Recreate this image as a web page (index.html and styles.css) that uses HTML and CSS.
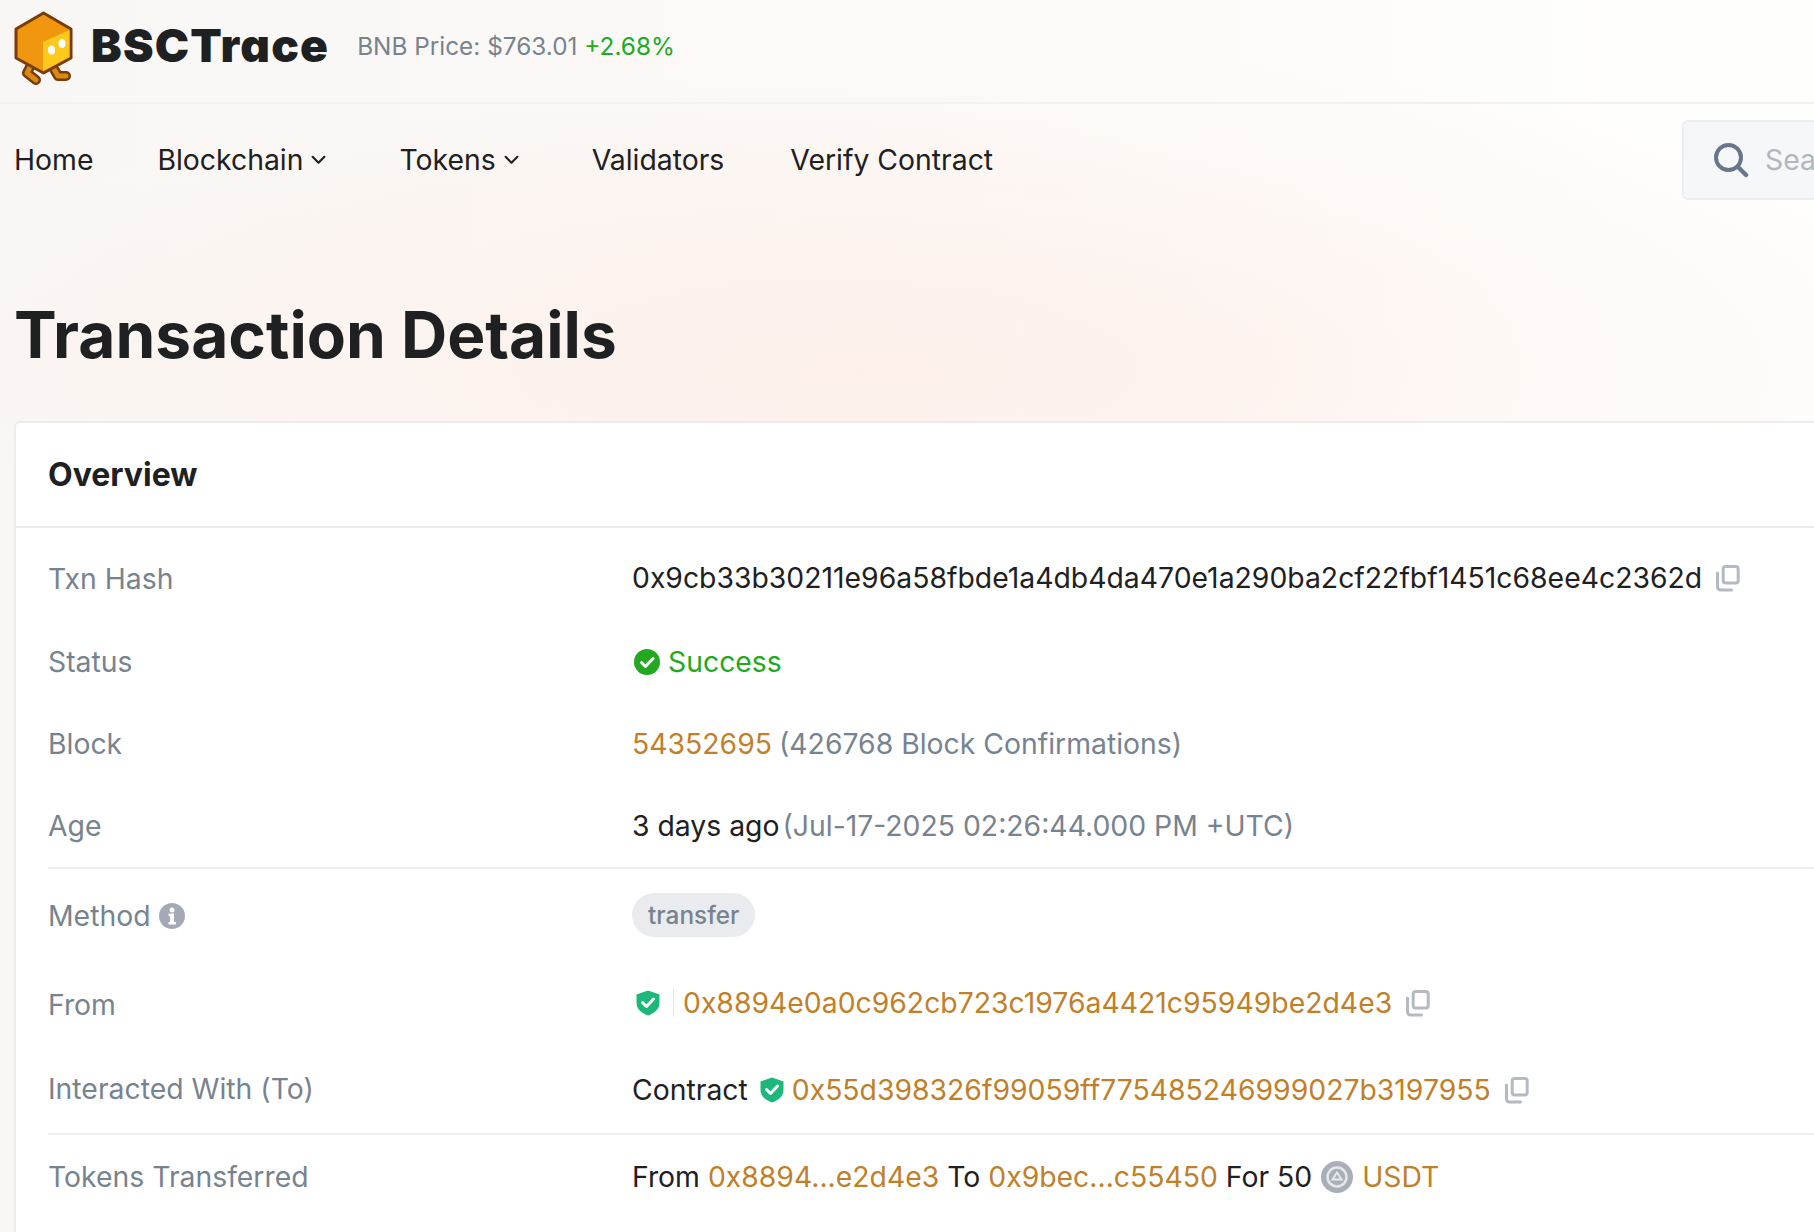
FILE: index.html
```html
<!DOCTYPE html>
<html lang="en">
<head>
<meta charset="utf-8">
<title>BSCTrace - Transaction Details</title>
<link rel="stylesheet" href="styles.css">
</head>
<body>
<svg class="defs" width="0" height="0" aria-hidden="true">
  <symbol id="copy" viewBox="0 0 24 27">
    <path d="M1.500 8v14a3 3 0 0 0 3 3h11" fill="none" stroke="#b4bac3" stroke-width="3" stroke-linecap="round"/>
    <rect x="7.200" y="1.500" width="15" height="16.500" rx="2.500" fill="none" stroke="#b4bac3" stroke-width="3"/>
  </symbol>
  <symbol id="shield" viewBox="0 0 24 26">
    <path d="M12 .5 23.500 4.500v8c0 6.500-4.500 10.500-11.500 13C5 23 .5 19 .5 12.500v-8z" fill="#1cb77a"/>
    <path d="m6.500 12.500 4 4 7-7.500" fill="none" stroke="#fff" stroke-width="3" stroke-linecap="round" stroke-linejoin="round"/>
  </symbol>
</svg>
<header class="topbar">
  <svg class="logo" viewBox="14 9 60 76" width="60" height="76" aria-label="BSCTrace logo">
    <path d="M33 60 27 72l9 7M54 68l4 7h8" fill="none" stroke="#7a3b06" stroke-width="10" stroke-linecap="round" stroke-linejoin="round"/>
    <path d="M33 60 27 72l9 7M54 68l4 7h8" fill="none" stroke="#d98a12" stroke-width="5" stroke-linecap="round" stroke-linejoin="round"/>
    <path d="M43.500 12 71 28v29L43.500 72 16 57V28z" fill="#f0960f" stroke="#7a3b06" stroke-width="3" stroke-linejoin="round"/>
    <path d="M43 41 69.500 29v27L43 70z" fill="#fdc91c"/>
    <ellipse cx="51.500" cy="49" rx="3.500" ry="4.500" fill="#fff"/>
    <ellipse cx="62" cy="42.500" rx="3.500" ry="4.500" fill="#fff"/>
  </svg>
  <span class="brand">BSCTrace</span>
  <span class="price">BNB Price: $763.01 <span class="up">+2.68%</span></span>
</header>
<nav class="nav">
  <a class="nav-item home">Home</a>
  <a class="nav-item chain">Blockchain <svg class="caret" viewBox="0 0 14 9" width="15" height="10"><path d="m1.500 1.500 5.500 5.500 5.500-5.500" fill="none" stroke="#1e2022" stroke-width="2" stroke-linecap="round" stroke-linejoin="round"/></svg></a>
  <a class="nav-item tokens">Tokens <svg class="caret" viewBox="0 0 14 9" width="15" height="10"><path d="m1.500 1.500 5.500 5.500 5.500-5.500" fill="none" stroke="#1e2022" stroke-width="2" stroke-linecap="round" stroke-linejoin="round"/></svg></a>
  <a class="nav-item validators">Validators</a>
  <a class="nav-item">Verify Contract</a>
  <div class="search">
    <svg class="search-icon" viewBox="0 0 36 36" width="36" height="36"><circle cx="15.500" cy="15.500" r="12.500" fill="none" stroke="#67758d" stroke-width="4"/><path d="m25 25 8 8" stroke="#67758d" stroke-width="4.500" stroke-linecap="round"/></svg>
    <span class="search-text">Search by Address / Txn Hash / Block / Token</span>
  </div>
</nav>
<h1 class="title">Transaction Details</h1>
<main class="card">
  <h2 class="card-head">Overview</h2>
  <section class="group group-first">
    <div class="row r-hash"><div class="label">Txn Hash</div><div class="value">0x9cb33b30211e96a58fbde1a4db4da470e1a290ba2cf22fbf1451c68ee4c2362d<svg class="copy" width="24" height="27"><use href="#copy"/></svg></div></div>
    <div class="row r-status"><div class="label">Status</div><div class="value ok"><svg class="check" viewBox="0 0 26 26" width="26" height="26"><circle cx="13" cy="13" r="13" fill="#22a91f"/><path d="m7.500 13.500 4 4 7.500-8" fill="none" stroke="#fff" stroke-width="3" stroke-linecap="round" stroke-linejoin="round"/></svg>Success</div></div>
    <div class="row r-block"><div class="label">Block</div><div class="value"><a class="link">54352695</a><span class="muted block-note">(426768 Block Confirmations)</span></div></div>
    <div class="row r-age"><div class="label">Age</div><div class="value">3 days ago<span class="muted age-date">(Jul-17-2025 02:26:44.000 PM +UTC)</span></div></div>
  </section>
  <section class="group">
    <div class="row r-method"><div class="label">Method <svg class="info" viewBox="0 0 26 26" width="26" height="26"><circle cx="13" cy="13" r="13" fill="#a3aab5"/><path d="M9.500 10.500h5.500v8.500h2v2.500H9.500V19H11v-6H9.500zM13 4.500a2.500 2.500 0 1 1 0 5 2.500 2.500 0 0 1 0-5z" fill="#fff"/></svg></div><div class="value"><span class="pill">transfer</span></div></div>
    <div class="row r-from"><div class="label">From</div><div class="value"><svg class="shield" width="24" height="26"><use href="#shield"/></svg><span class="vbar"></span><a class="link">0x8894e0a0c962cb723c1976a4421c95949be2d4e3</a><svg class="copy" width="24" height="27"><use href="#copy"/></svg></div></div>
    <div class="row r-to"><div class="label">Interacted With (To)</div><div class="value">Contract<svg class="shield shield-to" width="24" height="26"><use href="#shield"/></svg><a class="link">0x55d398326f99059ff775485246999027b3197955</a><svg class="copy" width="24" height="27"><use href="#copy"/></svg></div></div>
  </section>
  <section class="group">
    <div class="row r-tokens"><div class="label">Tokens Transferred</div><div class="value">From&nbsp;<a class="link">0x8894...e2d4e3</a>&nbsp;To&nbsp;<a class="link">0x9bec...c55450</a>&nbsp;For 50<svg class="coin" viewBox="0 0 32 32" width="32" height="32"><circle cx="16" cy="16" r="16" fill="#a9afb9"/><circle cx="16" cy="16" r="9.500" fill="none" stroke="#e6e8eb" stroke-width="2.500"/><path d="m16 11.500 4.500 7h-9z" fill="none" stroke="#e6e8eb" stroke-width="2"/></svg><a class="link">USDT</a></div></div>
  </section>
</main>
</body>
</html>
```
FILE: styles.css
```css
* { box-sizing: border-box; }
html, body { margin: 0; height: 100%; overflow: hidden; }
body {
  width: 1814px;
  height: 1232px;
  font-family: Inter, "Noto Sans", sans-serif;
  font-size: 28.35px;
  color: #1e2022;
  background:
    radial-gradient(ellipse 1100px 330px at 860px 370px, #fdf0ea 0%, rgba(253,240,234,0) 100%),
    linear-gradient(90deg, #f9f7f5 0, #fcfaf8 50%, #fefefd 90%);
}
.defs { position: absolute; }
.topbar {
  height: 104px;
  display: flex;
  align-items: center;
  padding: 0 0 10px 14px;
  border-bottom: 2px solid #f3f1ef;
}
.logo { flex: none; margin-top: 3px; }
.brand {
  margin: 0 0 2px 17px;
  font-size: 46px;
  font-weight: 900;
  letter-spacing: 1.2px;
  font-feature-settings: "cv11";
  color: #1e2022;
}
.price { margin-left: 28px; font-size: 24.35px; color: #77838f; }
.up { color: #22a91f; }
.nav {
  height: 112px;
  display: flex;
  align-items: center;
  padding-left: 14px;
  white-space: nowrap;
}
.nav-item { display: inline-flex; align-items: center; gap: 8px; }
.home { margin-right: 64px; }
.chain { margin-right: 73px; }
.tokens { margin-right: 73px; }
.validators { margin-right: 66px; }
.search {
  margin-left: auto;
  margin-right: -400px;
  flex: none;
  width: 532px;
  height: 80px;
  display: flex;
  align-items: center;
  gap: 16px;
  padding-left: 29px;
  background: #f6f7f8;
  border: 2px solid #eceef0;
  border-radius: 6px;
}
.search-icon { flex: none; }
.search-text { color: #b3b6ba; }
.title {
  margin: 0;
  height: 205px;
  padding: 80px 0 0 14px;
  font-size: 64px;
  font-weight: 700;
  line-height: 78px;
  color: #1e2022;
  white-space: nowrap;
}
.card {
  margin-left: 14px;
  width: 2000px;
  height: 900px;
  background: #fff;
  border: 2px solid #ececec;
  border-radius: 6px;
}
.card-head {
  margin: 0;
  height: 105px;
  padding-left: 32px;
  display: flex;
  align-items: center;
  font-size: 32px;
  font-weight: 700;
  border-bottom: 2px solid #ececec;
}
.group { margin-left: 32px; border-top: 2px solid #f0f0f0; }
.group-first { margin-left: 0; padding-left: 32px; border-top: 0; padding-top: 9px; }
.row { display: flex; align-items: center; white-space: nowrap; }
.label { width: 584px; flex: none; display: flex; align-items: center; gap: 8px; color: #77838f; }
.value { display: flex; align-items: center; white-space: pre; }
.r-hash { height: 84px; }
.r-hash .value { margin-top: -2px; }
.r-status { height: 82px; }
.r-block { height: 82px; }
.r-age { height: 82px; }
.r-method { height: 92px; }
.r-method .label { margin-top: 2px; }
.r-from { height: 86px; }
.r-from .label { margin-top: 2px; }
.r-from .value { margin-top: -2px; }
.r-to { height: 86px; }
.r-to .label { margin-bottom: 2px; }
.r-tokens { height: 84px; }
.muted { color: #77838f; }
.block-note { margin-left: 7px; }
.age-date { margin-left: 3px; }
.link { color: #c17f2a; }
.ok { color: #22a91f; }
.check { margin: 0 8px 0 2px; }
.copy { margin-left: 14px; flex: none; }
.pill {
  display: inline-block;
  padding: 0 16px;
  height: 44px;
  line-height: 44px;
  border-radius: 22px;
  background: #e9ebee;
  color: #77838f;
  font-size: 24.35px;
  font-weight: 550;
}
.shield { margin-left: 4px; flex: none; }
.shield-to { margin: 0 8px 0 12px; }
.vbar { width: 1px; height: 28px; margin: 0 9px 0 13px; background: #e2e4e7; }
.coin { margin: 0 9px; flex: none; }
```
